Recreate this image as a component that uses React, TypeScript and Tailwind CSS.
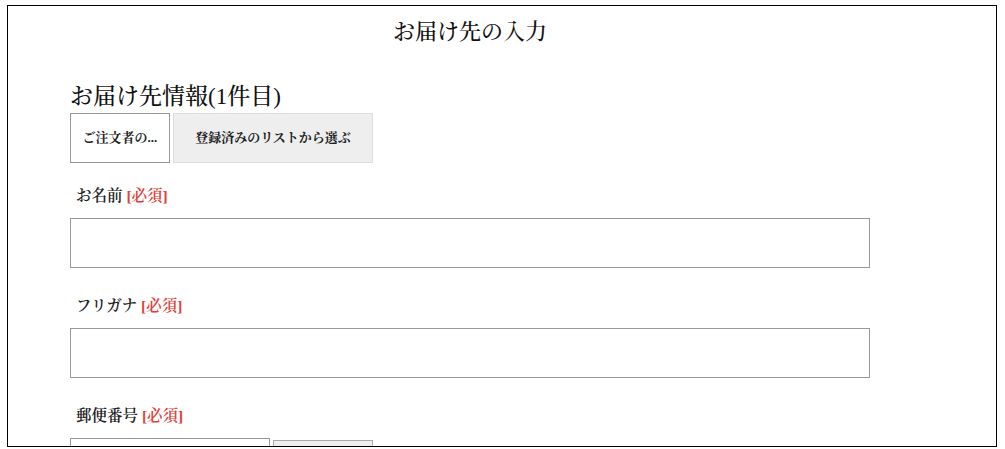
import React from "react";

const fontStack = {
  fontFamily: '"Liberation Serif", "Noto Serif CJK JP", "Noto Sans CJK JP", serif',
};

function Field({ label, children }: { label: string; children: React.ReactNode }) {
  return (
    <div className="mb-[28px]">
      <div className="pl-[6px] text-[15.5px] leading-[20px] font-semibold text-[#222] mb-[12px]">
        {label} <span className="text-[#e0423a]">[必須]</span>
      </div>
      {children}
    </div>
  );
}

export default function App() {
  return (
    <div className="w-[1005px] h-[449px] bg-white overflow-hidden" style={fontStack}>
      <div className="ml-[7px] mt-[5px] w-[990px] h-[442px] border border-black overflow-hidden">
        <div className="ml-[62px] w-[800px] pt-[12px]">
          <h1 className="text-center text-[22px] leading-[28px] font-medium text-[#111]">お届け先の入力</h1>
          <h2 className="mt-[35px] text-[23px] leading-[32px] font-medium text-[#111]">お届け先情報(1件目)</h2>
          <div className="flex gap-[3px] mb-[23px]">
            <button className="w-[100px] h-[50px] border border-[#999] bg-white text-[13px] font-bold text-[#222]">
              ご注文者の...
            </button>
            <button className="w-[200px] h-[50px] border border-[#ddd] bg-[#eee] text-[13px] font-bold text-[#222]">
              登録済みのリストから選ぶ
            </button>
          </div>
          <Field label="お名前">
            <input className="block w-[800px] h-[50px] border border-[#999] bg-white outline-none" />
          </Field>
          <Field label="フリガナ">
            <input className="block w-[800px] h-[50px] border border-[#999] bg-white outline-none" />
          </Field>
          <Field label="郵便番号">
            <div className="flex gap-[3px] items-start">
              <input className="block w-[200px] h-[50px] border border-[#999] bg-white outline-none" />
              <button className="mt-[2px] w-[100px] h-[48px] border border-[#aaa] bg-[#eee]" aria-label="住所検索" />
            </div>
          </Field>
        </div>
      </div>
    </div>
  );
}
